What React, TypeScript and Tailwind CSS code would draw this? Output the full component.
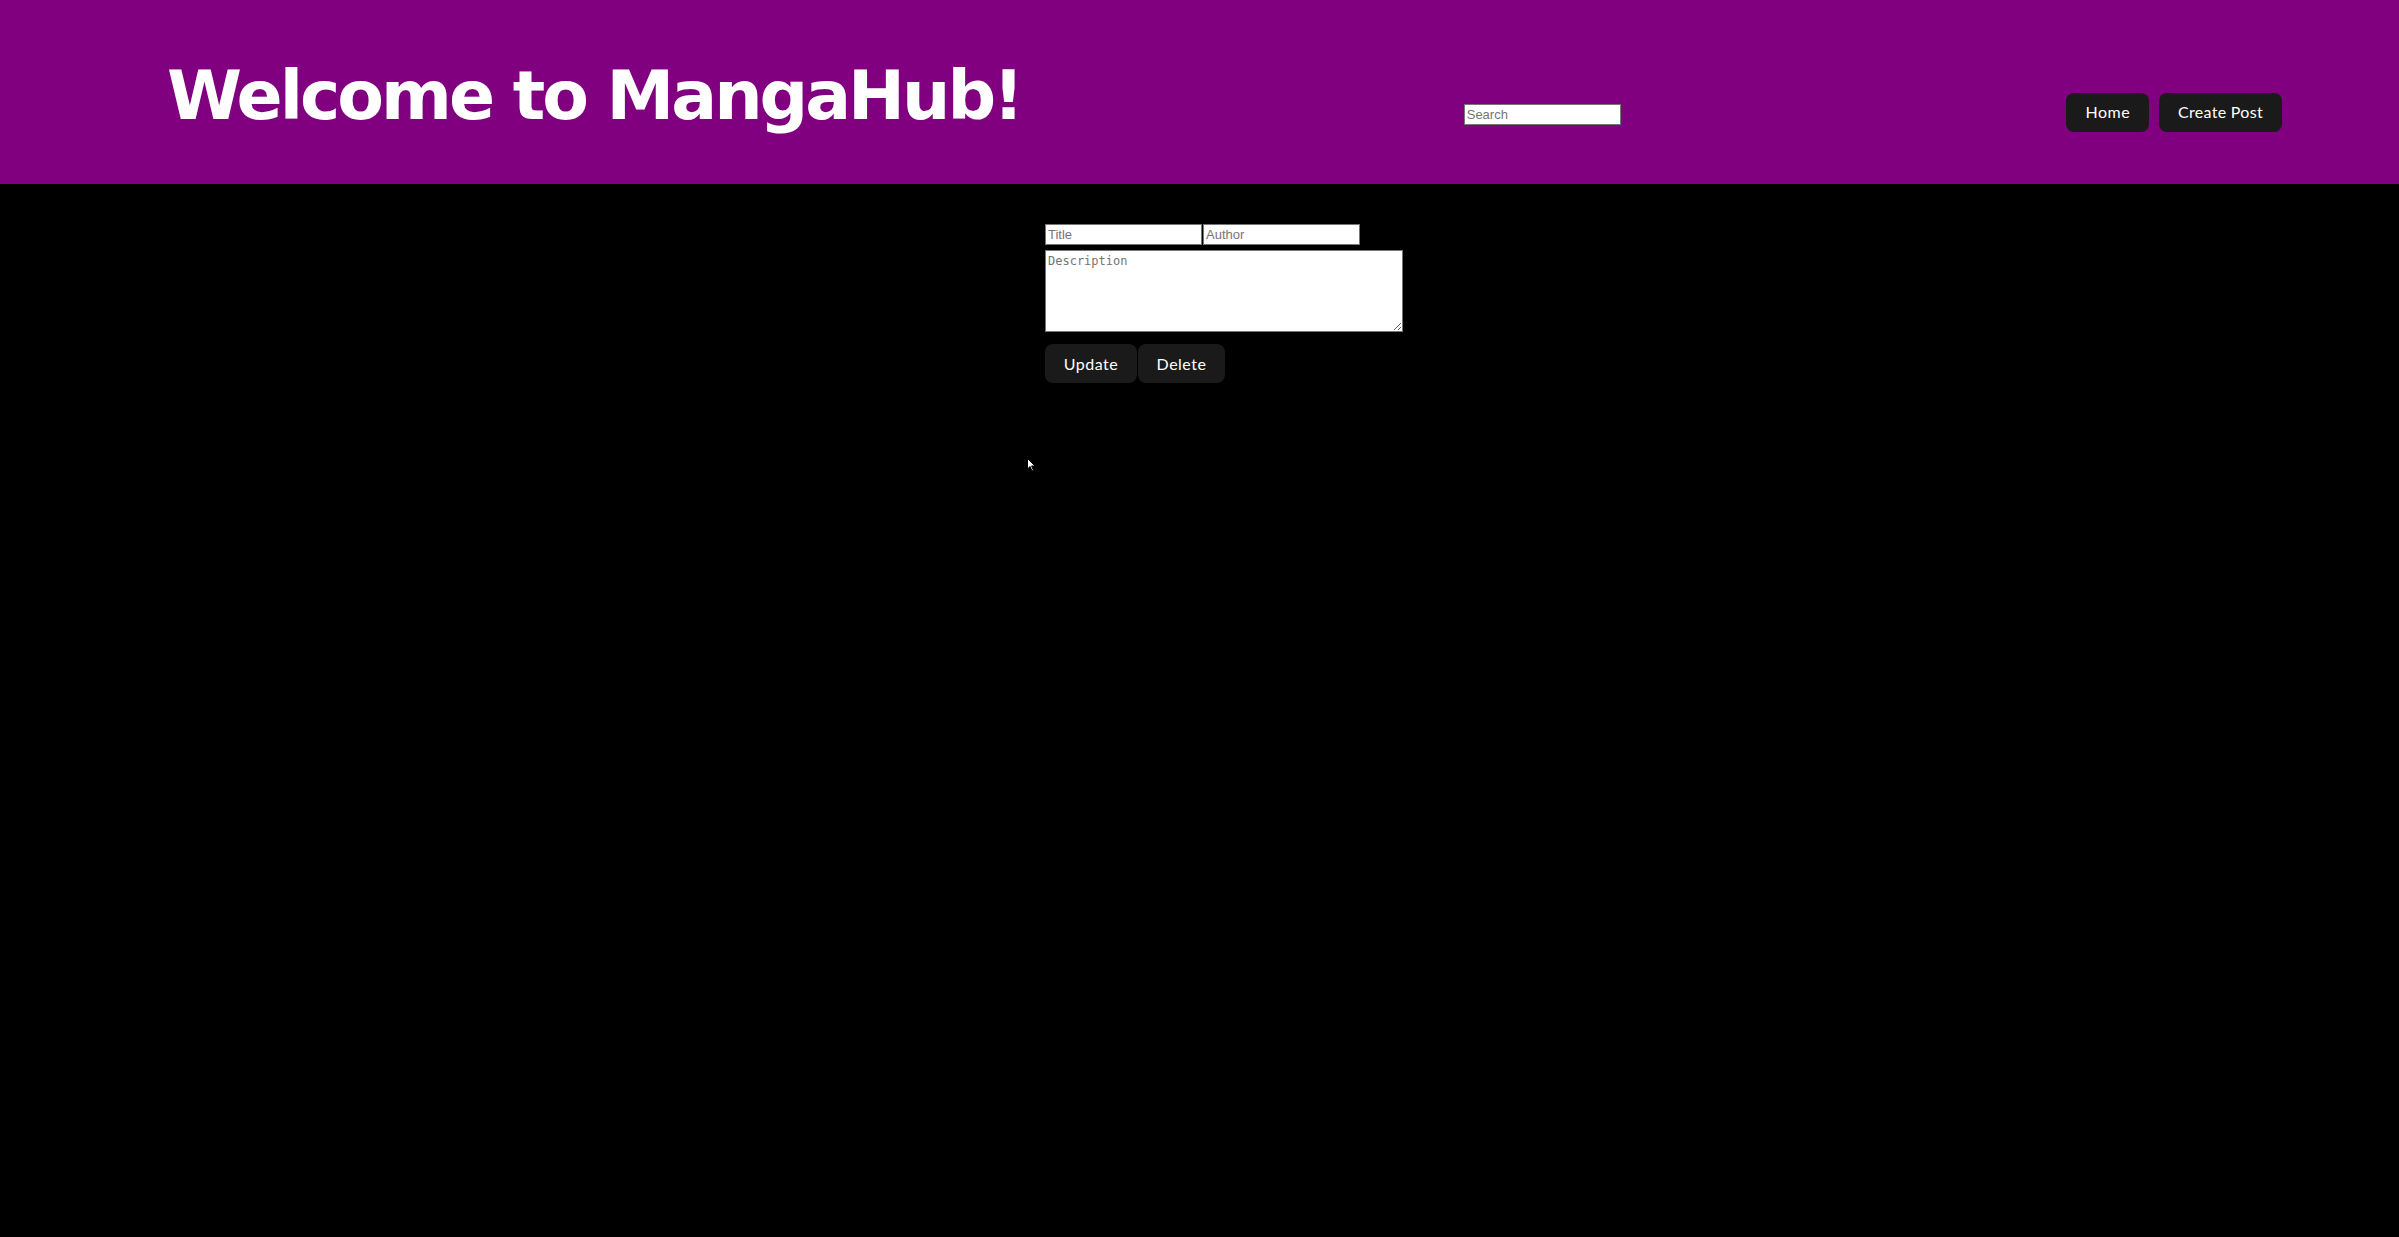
export default function App() {
  return (
    <div className="relative min-h-screen bg-black">
      <header className="flex h-[184px] items-center justify-between bg-[#800080] pl-[167px] pr-[117px]">
        <h1 className="mt-[7px] w-[851px] whitespace-nowrap font-['DejaVu_Sans',sans-serif] text-[68px] font-bold leading-none tracking-[-3px] text-white">
          Welcome to MangaHub!
        </h1>
        <input
          type="text"
          placeholder="Search"
          className="mt-[44px] h-[21px] w-[157px] border border-[#767676] bg-white px-[2px] font-['Liberation_Sans',sans-serif] text-[13px] text-black placeholder:text-[#757575]"
        />
        <nav className="mt-[40px] flex gap-[10px]">
          <button className="h-[39px] rounded-lg bg-[#1a1a1a] px-[19px] font-['Lato',sans-serif] text-[16px] tracking-[0.5px] text-white">
            Home
          </button>
          <button className="h-[39px] rounded-lg bg-[#1a1a1a] px-[19px] font-['Lato',sans-serif] text-[16px] tracking-[0.3px] text-white">
            Create Post
          </button>
        </nav>
      </header>

      <main className="pl-[1045px] pt-[40px]">
        <form className="flex w-[358px] flex-col">
          <div className="flex gap-[1px]">
            <input
              type="text"
              placeholder="Title"
              className="h-[21px] w-[157px] border border-[#767676] bg-white px-[2px] font-['Liberation_Sans',sans-serif] text-[13px] text-black placeholder:text-[#757575]"
            />
            <input
              type="text"
              placeholder="Author"
              className="h-[21px] w-[157px] border border-[#767676] bg-white px-[2px] font-['Liberation_Sans',sans-serif] text-[13px] text-black placeholder:text-[#757575]"
            />
          </div>
          <textarea
            placeholder="Description"
            className="mt-[5px] h-[82px] w-[358px] border border-[#767676] bg-white px-[2px] py-[1px] font-['DejaVu_Sans_Mono',monospace] text-[12px] text-black placeholder:text-[#757575]"
          />
          <div className="mt-[12px] flex gap-[1px]">
            <button
              type="button"
              className="h-[39px] w-[92px] rounded-lg bg-[#1a1a1a] font-['Lato',sans-serif] text-[16px] tracking-[0.5px] text-white"
            >
              Update
            </button>
            <button
              type="button"
              className="h-[39px] w-[87px] rounded-lg bg-[#1a1a1a] font-['Lato',sans-serif] text-[16px] tracking-[0.5px] text-white"
            >
              Delete
            </button>
          </div>
        </form>
      </main>

      {/* mouse pointer captured in the screenshot */}
      <svg
        className="absolute left-[1027px] top-[458px]"
        width="10"
        height="14"
        viewBox="0 0 10 14"
      >
        <path d="M0.5 0.5 L0.5 11 L3 8.5 L5 13 L6.5 12.3 L4.6 8 L8 8 Z" fill="white" stroke="black" strokeWidth="1" />
      </svg>
    </div>
  );
}
